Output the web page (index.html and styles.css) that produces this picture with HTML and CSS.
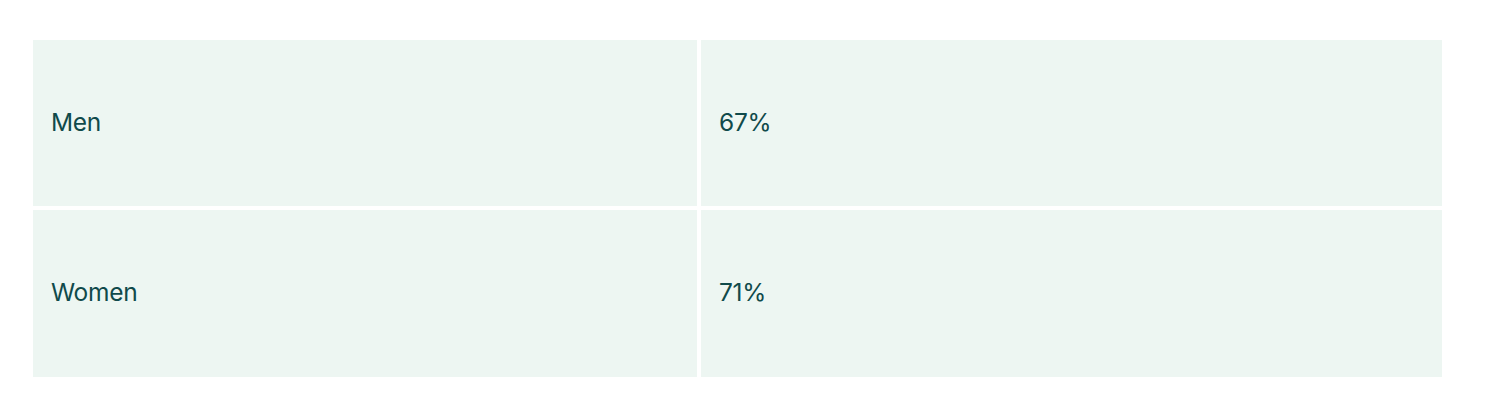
FILE: index.html
```html
<!DOCTYPE html>
<html lang="en">
<head>
<meta charset="utf-8">
<title>Table</title>
<link rel="stylesheet" href="styles.css">
</head>
<body>
<div class="page">
  <div class="table">
    <div class="cell">Men</div>
    <div class="cell">67%</div>
    <div class="cell">Women</div>
    <div class="cell">71%</div>
  </div>
</div>
</body>
</html>
```
FILE: styles.css
```css
html, body {
  margin: 0;
  padding: 0;
  background: #ffffff;
}
.page {
  padding: 40px 0 0 33px;
}
.table {
  display: grid;
  grid-template-columns: 664px 741px;
  grid-template-rows: 166px 167px;
  gap: 4px;
  width: 1409px;
}
.cell {
  background: #edf6f2;
  display: flex;
  align-items: center;
  padding: 0 18px 3px;
  font-family: Inter, "Liberation Sans", sans-serif;
  font-size: 24.5px;
  color: #104a4b;
  letter-spacing: -0.3px;
}
```
